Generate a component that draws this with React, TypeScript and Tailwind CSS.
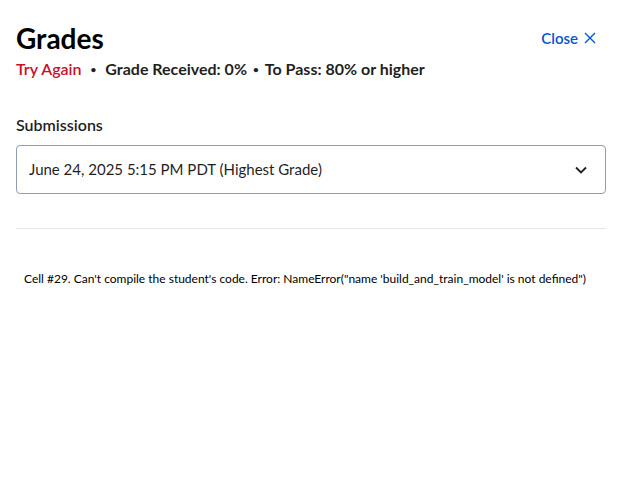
const App = () => {
  return (
    <div className="w-[636px] h-[500px] bg-white text-[#1f1f1f]" style={{ fontFamily: 'Lato, "Noto Sans", sans-serif' }}>
      <div className="px-4 pt-[20px]">
        <div className="flex justify-between items-start">
          <div>
            <h1 className="text-[28px] leading-[36px] font-bold text-black">Grades</h1>
            <div className="flex items-center text-[16px] font-bold leading-[24px] mt-[1px]">
              <span className="text-[#c8102e] font-semibold">Try Again</span>
              <span className="mx-[9px] text-[10px]">•</span>
              <span>Grade Received: 0%</span>
              <span className="mx-[6px] text-[10px]">•</span>
              <span>To Pass: 80% or higher</span>
            </div>
          </div>
          <button className="flex items-center gap-[6px] text-[#0056d2] text-[15px] font-semibold mt-[7px] mr-[24px]">
            Close
            <svg className="w-[12px] h-[12px]" viewBox="0 0 12 12" fill="none" stroke="currentColor" strokeWidth="1.4">
              <path d="M1 1l10 10M11 1L1 11" />
            </svg>
          </button>
        </div>

        <div className="mt-[32px]">
          <p className="text-[16px] font-semibold leading-[24px]">Submissions</p>
          <div className="mt-[8px] w-[590px] h-[49px] border border-[#8f9db5] rounded-[4px] flex items-center justify-between pl-[12px] pr-[17px]">
            <span className="text-[15px]">June 24, 2025 5:15 PM PDT (Highest Grade)</span>
            <svg className="w-[14px] h-[14px]" viewBox="0 0 14 14" fill="none" stroke="#1f1f1f" strokeWidth="1.8">
              <path d="M2 4.5l5 5 5-5" />
            </svg>
          </div>
        </div>

        <div className="mt-[34px] w-[590px] border-t border-[#e5e7eb]" />

        <p className="mt-[41px] pl-[8px] text-[12px] text-black">
          Cell #29. Can't compile the student's code. Error: NameError("name 'build_and_train_model' is not defined")
        </p>
      </div>
    </div>
  );
};

export default App;
